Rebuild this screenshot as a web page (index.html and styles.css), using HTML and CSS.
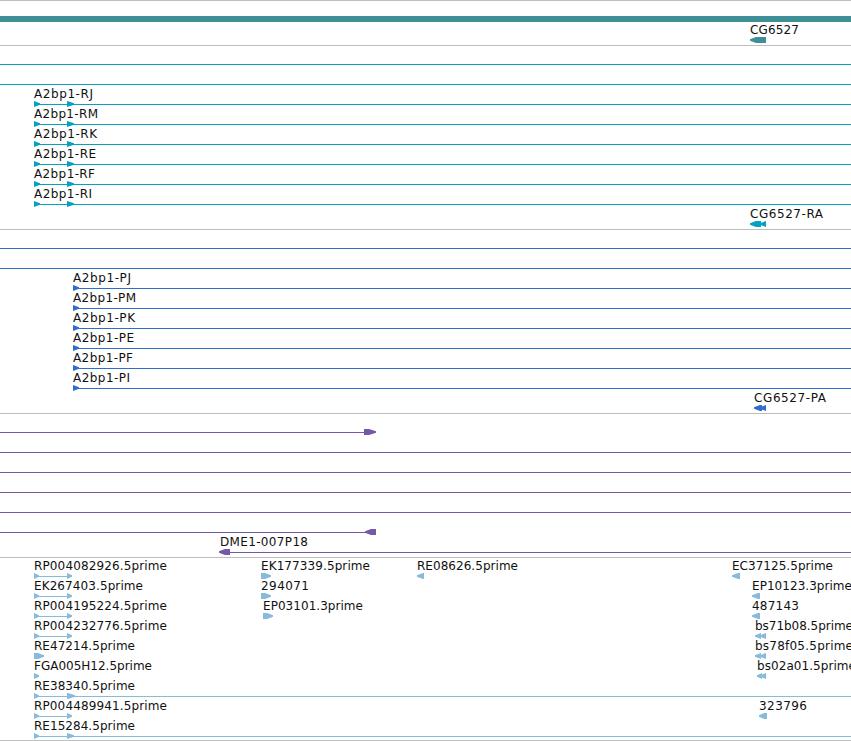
FILE: index.html
```html
<!DOCTYPE html>
<html lang="en">
<head>
    <meta charset="UTF-8">
    <meta name="viewport" content="width=device-width, initial-scale=1.0">
    <title>Genome Browser</title>
    <link rel="stylesheet" href="styles.css">
</head>
<body>
    <div id="browser" class="browser"></div>
    <script src="tracks.js"></script>
</body>
</html>
```
FILE: styles.css
```css
body {
    margin: 0;
    background-color: #fff;
    overflow: hidden;
}
.browser {
    width: 851px;
    border-top: 1px solid #bebebe;
}
.track {
    display: flex;
    flex-direction: column;
    border-bottom: 1px solid #bebebe;
    padding-bottom: 3px;
}
.genes {
    gap: 1px;
    color: #3e8f96;
}
.transcripts {
    color: #04a1c0;
}
.proteins {
    color: #2f6dcd;
}
.clones {
    color: #7658a8;
}
.ests {
    padding-bottom: 2px;
    color: #86bbdc;
}
.row {
    display: block;
    width: 100%;
    height: 20px;
    overflow: visible;
}
.row rect,
.row polygon {
    fill: currentColor;
}
.row text {
    fill: #111;
    font-family: "DejaVu Sans", sans-serif;
    font-size: 12px;
}
```
FILE: tracks.js
```javascript
const END = 851;

// label: [text, x, width]
// line: [start, end]
// boxes: [start, end, direction, head length]
function mrna(name, width) {
    return { labels: [[name, 34, width]], line: [34, END], boxes: [[34, 40, 1, 6], [67, 74, 1, 7]] };
}

function protein(name, width) {
    return { labels: [[name, 73, width]], line: [73, END], boxes: [[73, 79, 1, 6]] };
}

const full = { line: [0, END] };
const spliced = [[34, 39, 1, 5], [67, 72, 1, 5]];

const tracks = [
    { name: 'genes', rows: [
        { boxes: [[0, END, 0, 0]] },
        { labels: [['CG6527', 750, 49]], boxes: [[750, 766, -1, 6]] }
    ] },
    { name: 'transcripts', rows: [
        full,
        full,
        mrna('A2bp1-RJ', 59),
        mrna('A2bp1-RM', 64),
        mrna('A2bp1-RK', 63),
        mrna('A2bp1-RE', 62),
        mrna('A2bp1-RF', 61),
        mrna('A2bp1-RI', 58),
        { labels: [['CG6527-RA', 750, 73]], boxes: [[750, 761, -1, 6], [760, 766, -1, 6]] }
    ] },
    { name: 'proteins', rows: [
        full,
        full,
        protein('A2bp1-PJ', 58),
        protein('A2bp1-PM', 63),
        protein('A2bp1-PK', 62),
        protein('A2bp1-PE', 61),
        protein('A2bp1-PF', 60),
        protein('A2bp1-PI', 57),
        { labels: [['CG6527-PA', 754, 72]], boxes: [[754, 762, -1, 6], [760, 766, -1, 6]] }
    ] },
    { name: 'clones', rows: [
        { line: [0, 370], boxes: [[364, 376, 1, 7]] },
        full,
        full,
        full,
        full,
        { line: [0, 370], boxes: [[365, 376, -1, 6]] },
        { labels: [['DME1-007P18', 220, 88]], line: [226, END], boxes: [[219, 230, -1, 6]] }
    ] },
    { name: 'ests', rows: [
        { labels: [['RP004082926.5prime', 34, 133], ['EK177339.5prime', 261, 109], ['RE08626.5prime', 417, 101], ['EC37125.5prime', 732, 101]],
          line: [34, 70], boxes: [...spliced, [261, 271, 1, 6], [417, 424, -1, 6], [732, 740, -1, 6]] },
        { labels: [['EK267403.5prime', 34, 109], ['294071', 261, 48], ['EP10123.3prime', 752, 100]],
          line: [34, 70], boxes: [...spliced, [261, 271, 1, 6], [752, 760, -1, 6]] },
        { labels: [['RP004195224.5prime', 34, 133], ['EP03101.3prime', 263, 100], ['487143', 752, 47]],
          line: [34, 70], boxes: [...spliced, [263, 273, 1, 6], [752, 760, -1, 6]] },
        { labels: [['RP004232776.5prime', 34, 133], ['bs71b08.5prime', 755, 98]],
          line: [34, 70], boxes: [...spliced, [755, 761, -1, 6], [760, 766, -1, 6]] },
        { labels: [['RE47214.5prime', 34, 101], ['bs78f05.5prime', 755, 98]],
          boxes: [[34, 44, 1, 6], [755, 761, -1, 6], [760, 766, -1, 6]] },
        { labels: [['FGA005H12.5prime', 34, 118], ['bs02a01.5prime', 757, 99]],
          boxes: [[34, 39, 1, 5], [757, 762, -1, 5], [760, 766, -1, 6]] },
        { labels: [['RE38340.5prime', 34, 101]],
          line: [34, END], boxes: [[34, 39, 1, 5], [67, 75, 1, 7]] },
        { labels: [['RP004489941.5prime', 34, 133], ['323796', 759, 48]],
          line: [34, 70], boxes: [...spliced, [759, 767, -1, 5]] },
        { labels: [['RE15284.5prime', 34, 101]],
          line: [34, END], boxes: [[34, 39, 1, 5], [67, 74, 1, 7]] }
    ] }
];

// Exon box, pointed on the side of the strand
function drawBox([start, end, dir, head]) {
    if (dir === 0) {
        return `<rect x="${start}" y="15" width="${end - start}" height="6"/>`;
    }
    if (dir > 0) {
        return `<polygon points="${start},15 ${end - head},15 ${end},17.3 ${end},18.7 ${end - head},21 ${start},21"/>`;
    }
    return `<polygon points="${end},15 ${start + head},15 ${start},17.3 ${start},18.7 ${start + head},21 ${end},21"/>`;
}

// Shapes hang over the bottom edge of the row by 1px
function drawRow(row) {
    let svg = '<svg class="row">';
    if (row.line) {
        svg += `<rect x="${row.line[0]}" y="18" width="${row.line[1] - row.line[0]}" height="1"/>`;
    }
    svg += (row.boxes || []).map(drawBox).join('');
    (row.labels || []).forEach(([text, x, width]) => {
        svg += `<text x="${x}" y="12" textLength="${width}">${text}</text>`;
    });
    return svg + '</svg>';
}

document.getElementById('browser').innerHTML = tracks.map(track =>
    `<div class="track ${track.name}">${track.rows.map(drawRow).join('')}</div>`
).join('');
```
